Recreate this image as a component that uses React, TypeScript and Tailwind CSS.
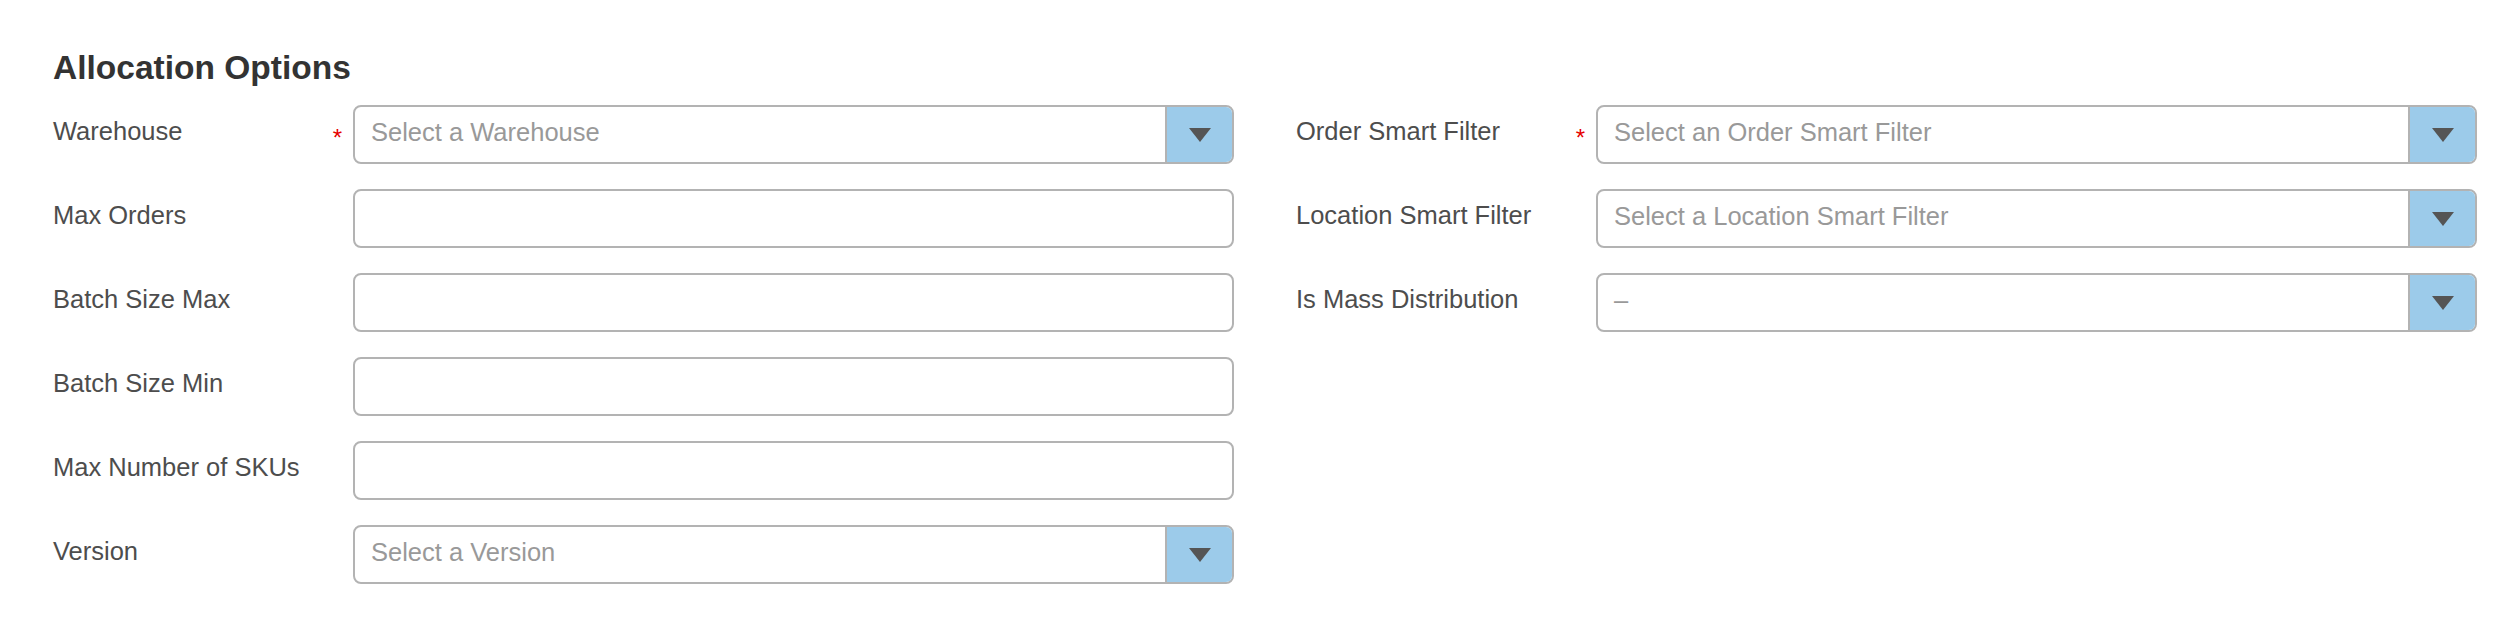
import React from 'react';

type Field = {
  label: string;
  kind: 'select' | 'text';
  placeholder?: string;
  value?: string;
  required?: boolean;
};

const leftFields: Field[] = [
  { label: 'Warehouse', kind: 'select', placeholder: 'Select a Warehouse', required: true },
  { label: 'Max Orders', kind: 'text' },
  { label: 'Batch Size Max', kind: 'text' },
  { label: 'Batch Size Min', kind: 'text' },
  { label: 'Max Number of SKUs', kind: 'text' },
  { label: 'Version', kind: 'select', placeholder: 'Select a Version' },
];

const rightFields: Field[] = [
  { label: 'Order Smart Filter', kind: 'select', placeholder: 'Select an Order Smart Filter', required: true },
  { label: 'Location Smart Filter', kind: 'select', placeholder: 'Select a Location Smart Filter' },
  { label: 'Is Mass Distribution', kind: 'select', value: '–' },
];

const Caret = () => (
  <svg width="22" height="14" viewBox="0 0 22 14" className="translate-y-[1px]">
    <path d="M0 0 L22 0 L11 14 Z" fill="#555555" />
  </svg>
);

const FormRow: React.FC<{ field: Field }> = ({ field }) => (
  <div className="flex items-center h-[59px]">
    <label className="w-[300px] shrink-0 flex items-center text-[25.5px] leading-none text-[#4d4d4d] pb-[4px]">
      <span>{field.label}</span>
      {field.required && (
        <span className="ml-auto mr-[11px] text-[24px] leading-none text-[#e60000] translate-y-[6px]">*</span>
      )}
    </label>
    {field.kind === 'text' ? (
      <input
        type="text"
        className="flex-1 min-w-0 h-[59px] border-2 border-[#b3b3b3] rounded-[8px] bg-white px-[16px] text-[25.5px] text-[#333] outline-none"
      />
    ) : (
      <div className="flex-1 min-w-0 h-[59px] flex border-2 border-[#b3b3b3] rounded-[8px] overflow-hidden bg-white">
        <div className="flex-1 flex items-center pl-[16px] pb-[2px] text-[25.5px] leading-none text-[#999999]">
          {field.value ?? field.placeholder}
        </div>
        <div className="w-[67px] shrink-0 bg-[#9ccbea] border-l-2 border-[#b3b3b3] flex items-center justify-center">
          <Caret />
        </div>
      </div>
    )}
  </div>
);

export default function App() {
  return (
    <div className="min-h-[632px] bg-white pl-[53px] pr-[39px] pt-[51px] font-['Liberation_Sans',Arial,sans-serif]">
      <h2 className="text-[33.5px] leading-none font-bold text-[#333333]">Allocation Options</h2>
      <div className="mt-[20px] grid grid-cols-2 gap-x-[62px] items-start">
        <div className="flex flex-col gap-[25px]">
          {leftFields.map(f => (
            <FormRow key={f.label} field={f} />
          ))}
        </div>
        <div className="flex flex-col gap-[25px]">
          {rightFields.map(f => (
            <FormRow key={f.label} field={f} />
          ))}
        </div>
      </div>
    </div>
  );
}
